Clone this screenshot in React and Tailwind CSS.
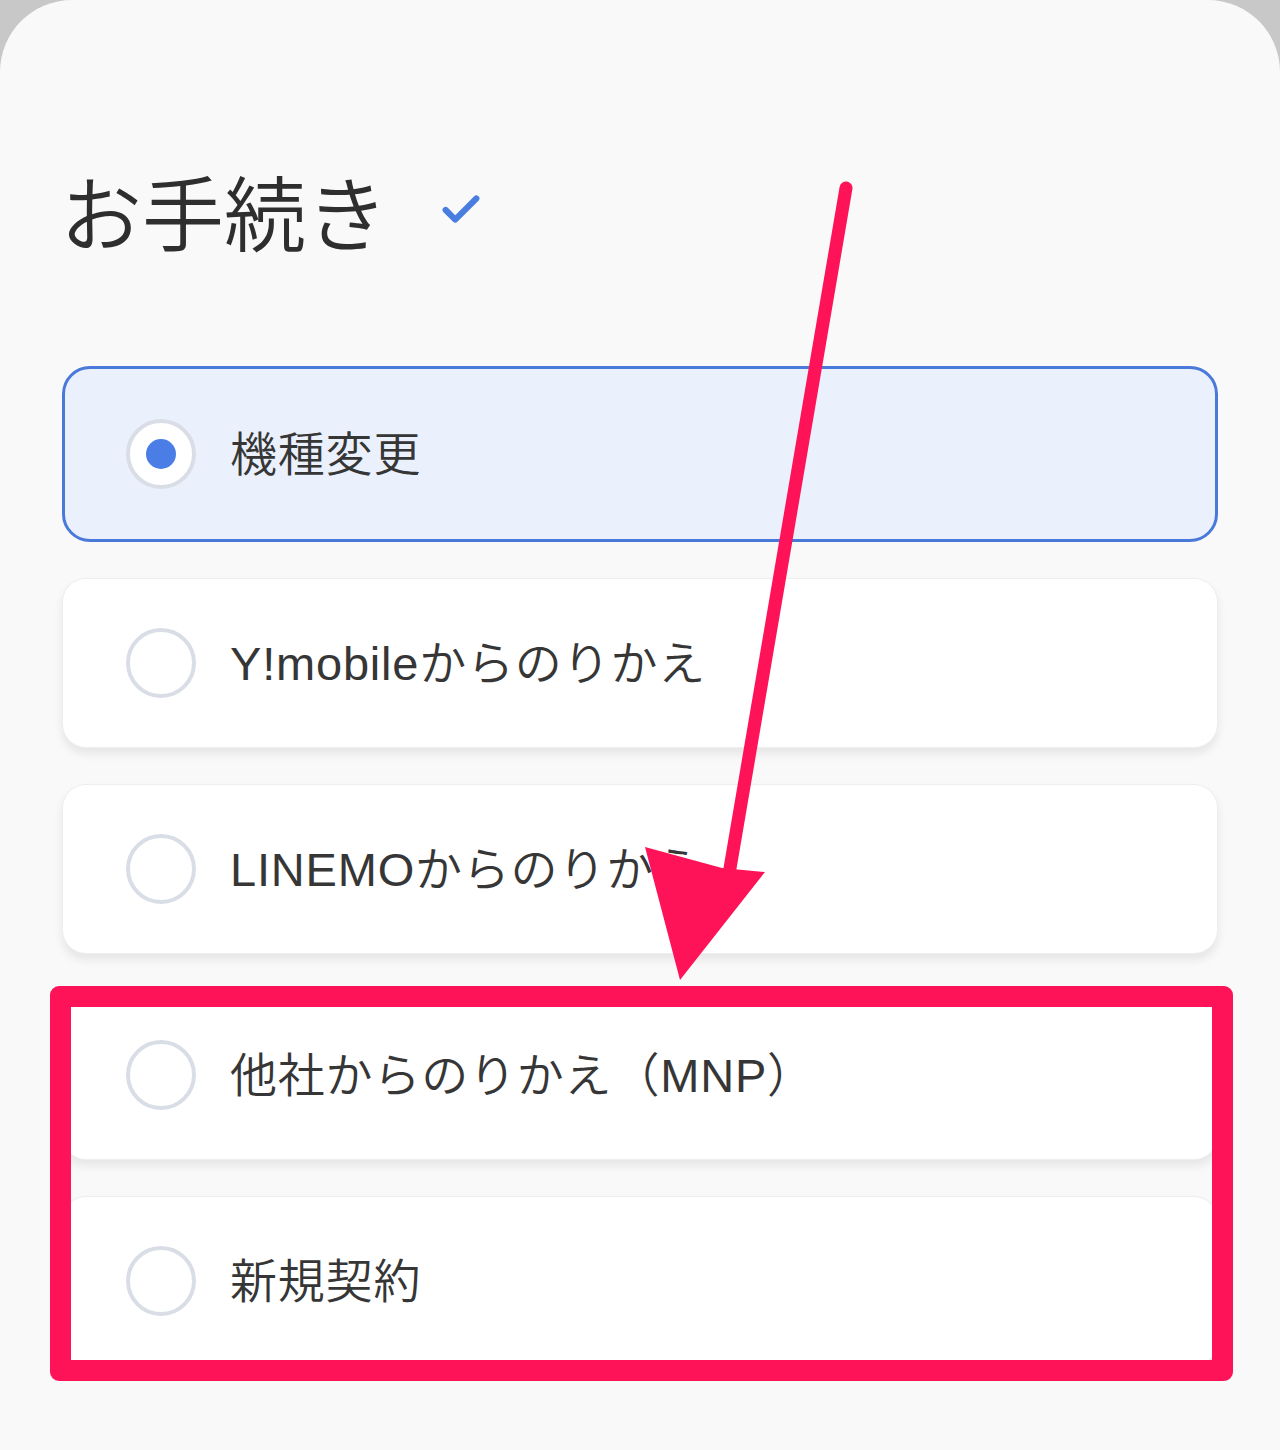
import { Check } from 'lucide-react';

const options = [
  { label: '機種変更', selected: true },
  { label: 'Y!mobileからのりかえ' },
  { label: 'LINEMOからのりかえ' },
  { label: '他社からのりかえ（MNP）' },
  { label: '新規契約' },
];

function Radio({ selected }) {
  return (
    <span className="flex items-center justify-center w-[70px] h-[70px] rounded-full border-[4px] border-[#d9dee6] bg-white shrink-0">
      {selected && <span className="w-[30px] h-[30px] rounded-full bg-[#4a7de6]" />}
    </span>
  );
}

function Option({ label, selected }) {
  return (
    <div
      className={
        selected
          ? 'flex items-center h-[176px] px-[61px] rounded-[28px] border-[3px] border-[#4a7ad9] bg-[#ebf1fc]'
          : 'flex items-center h-[170px] px-[63px] rounded-[24px] border border-[#eeeeee] bg-white shadow-[0_6px_10px_rgba(0,0,0,0.08)]'
      }
    >
      <Radio selected={selected} />
      <span className="ml-[34px] text-[47px] leading-none font-[350] text-[#363636] tracking-[0.8px]">{label}</span>
    </div>
  );
}

export default function App() {
  return (
    <div
      className="relative w-[1280px] h-[1450px] bg-[#c8c8c8] overflow-hidden"
      style={{ fontFamily: '"Liberation Sans", "Noto Sans CJK JP", sans-serif' }}
    >
      <div className="h-full rounded-t-[72px] bg-[#f9f9f9] px-[62px] pt-[172px]">
        {/* Title */}
        <div className="flex items-center">
          <h1 className="ml-[-2px] text-[82px] leading-[90px] font-[350] text-[#2e2e2e]">お手続き</h1>
          <Check className="ml-[50px] mt-[-14px] w-[46px] h-[46px] text-[#4a7de0]" strokeWidth={3.2} />
        </div>

        {/* Options */}
        <div className="mt-[104px] flex flex-col gap-[36px]">
          {options.map((o) => (
            <Option key={o.label} {...o} />
          ))}
        </div>
      </div>

      {/* Annotation: red highlight box */}
      <div className="absolute left-[50px] top-[986px] w-[1183px] h-[395px] border-[21px] border-[#ff1358] rounded-[9px]" />

      {/* Annotation: arrow */}
      <svg className="absolute left-0 top-0" width="1280" height="1450" viewBox="0 0 1280 1450">
        <line x1="846" y1="188" x2="728" y2="880" stroke="#ff1358" strokeWidth="13" strokeLinecap="round" />
        <polygon points="645,847 722,868 765,872 680,980" fill="#ff1358" />
      </svg>
    </div>
  );
}
